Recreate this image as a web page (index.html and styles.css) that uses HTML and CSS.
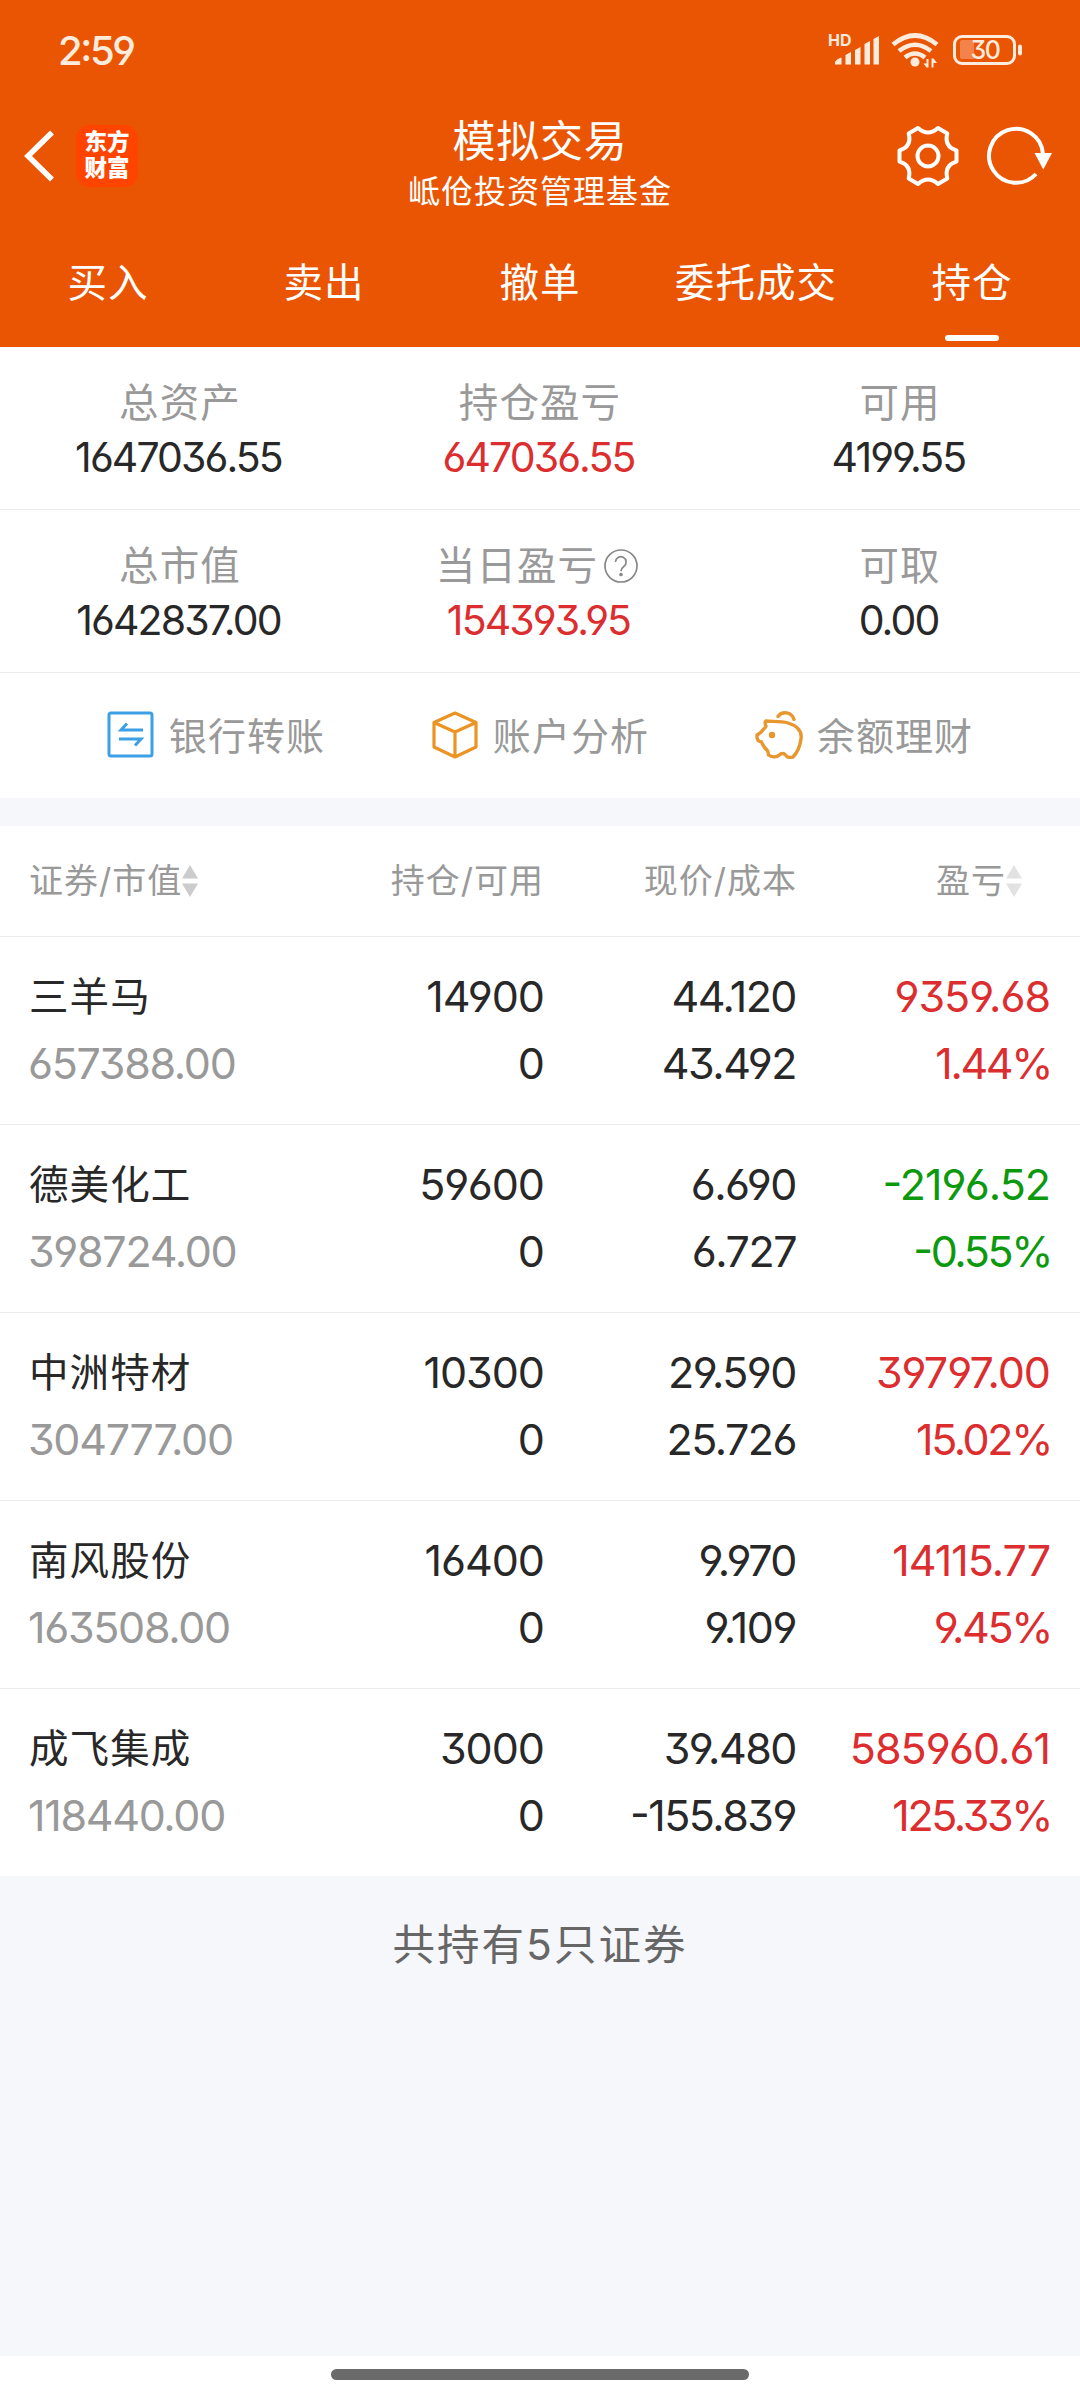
FILE: index.html
```html
<!DOCTYPE html>
<html lang="zh-CN">
<head>
  <meta charset="UTF-8" />
  <meta name="viewport" content="width=device-width, initial-scale=1" />
  <title>模拟交易</title>
  <link rel="stylesheet" href="styles.css">
</head>
<body>
  <header class="header">
    <div class="status">
      <span class="time">2:59</span>
      <svg class="status-icons" width="196" height="40" viewBox="0 0 196 40" fill="#fdebdd">
        <text x="0" y="16" class="hd">HD</text>
        <path d="M7 34.500V32Q9 28.500 13.500 27.500V34.500ZM17.500 34.500V25L23 22V34.500ZM27 34.500V20L32.500 17V34.500ZM36.500 34.500V14L42 11V34.500ZM45.500 34.500V9L51 6V34.500Z"/>
        <g fill="none" stroke="#fdebdd" stroke-width="4.600">
          <path d="M65 14.500Q87 -3.500 109 14.500"/>
          <path d="M71 21Q87 8.500 103 21"/>
          <path d="M77 27.500Q87 19.500 97 27.500"/>
        </g>
        <circle cx="87" cy="32" r="4.500"/>
        <path d="M100.500 29v8.500h-2l-3-4h3v-4.500zM103.500 37.500v-9h2l3.500 4.500h-3.500v4.500z"/>
        <rect x="126.500" y="6.500" width="60" height="27" rx="7.500" fill="none" stroke="#fdebdd" stroke-width="3"/>
        <path d="M134 10h12v19h-12a2 2 0 0 1-2-2V12a2 2 0 0 1 2-2z" fill="#f3834a"/>
        <rect x="190" y="14.500" width="4" height="11" rx="2"/>
        <text x="142.500" y="29" class="battery-text">30</text>
      </svg>
    </div>

    <div class="nav">
      <div class="nav-left">
        <svg width="30" height="52" viewBox="0 0 30 52" fill="none" stroke="#fff" stroke-width="5.500"><path d="M28 2.500 4 26 28 49.500"/></svg>
        <div class="logo">东方<br>财富</div>
      </div>
      <div class="nav-title">
        <h1>模拟交易</h1>
        <p>岻伧投资管理基金</p>
      </div>
      <div class="nav-right">
        <svg width="64" height="64" viewBox="-32 -32 64 64" fill="none" stroke="#fff" stroke-width="4" stroke-linejoin="round">
          <path d="M-10 -28Q0 -19 10 -28L19.300 -22.500Q16 -9.300 28.500 -5.600V5.600Q16 9.300 19.300 22.500L10 28Q0 19 -10 28L-19.300 22.500Q-16 9.300 -28.500 5.600V-5.600Q-16 -9.300 -19.300 -22.500Z"/>
          <circle r="10.500"/>
        </svg>
        <svg width="68" height="64" viewBox="-31 -32 68 64" fill="none" stroke="#fff" stroke-width="4">
          <path d="M20 18A27 27 0 1 1 27 -2"/>
          <path d="M18.500 -3h17.500L27.300 13.500z" fill="#fff" stroke="none"/>
        </svg>
      </div>
    </div>

    <div class="tabs">
      <div class="tab">买入</div>
      <div class="tab">卖出</div>
      <div class="tab">撤单</div>
      <div class="tab">委托成交</div>
      <div class="tab active">持仓</div>
    </div>
  </header>

  <section class="stats">
    <div class="stat"><div class="label">总资产</div><div class="value">1647036.55</div></div>
    <div class="stat"><div class="label">持仓盈亏</div><div class="value red">647036.55</div></div>
    <div class="stat"><div class="label">可用</div><div class="value">4199.55</div></div>
  </section>
  <section class="stats">
    <div class="stat"><div class="label">总市值</div><div class="value">1642837.00</div></div>
    <div class="stat">
      <div class="label help">当日盈亏
        <svg width="36" height="36" viewBox="0 0 36 36" fill="none" stroke="#888" stroke-width="1.700">
          <circle cx="18" cy="18" r="16"/>
          <path d="M12.500 14a5.300 5.300 0 1 1 8.500 4.300c-2 1.500-3 2.500-3 5"/>
          <circle cx="18" cy="26.500" r="1" fill="#888"/>
        </svg>
      </div>
      <div class="value red">154393.95</div>
    </div>
    <div class="stat"><div class="label">可取</div><div class="value">0.00</div></div>
  </section>

  <section class="actions">
    <div class="action">
      <svg width="48" height="48" viewBox="0 0 48 48" fill="none" stroke="#3d9fe5" stroke-width="3">
        <rect x="2" y="2" width="43" height="43" rx="2"/>
        <path d="M36 19H14L20 12.500M12 28H34L28 34.500"/>
      </svg>
      银行转账
    </div>
    <div class="action">
      <svg width="48" height="48" viewBox="0 0 48 48" fill="none" stroke="#ec9423" stroke-width="3.200" stroke-linejoin="round">
        <path d="M24 2 45 11.500V36L24 46 3 36V11.500ZM3 11.500 24 21 45 11.500M24 21V46"/>
      </svg>
      账户分析
    </div>
    <div class="action">
      <svg width="48" height="48" viewBox="0 0 48 48" fill="none" stroke="#e8962e" stroke-width="3.400" stroke-linecap="round" stroke-linejoin="round">
        <path d="M11 10C16 11 25 9.500 33 12C43 15 47 21 46 28C45 35 42 42 38 46C35 47 32 46.500 30.500 44C29 42 26 42 24.500 44C21 47 16 46 13.500 44C13.500 42 13 40 12 39C9 37 8 34 6.500 31C4 30.500 2 28.500 2 26V24C4 22.500 6 22 7 20C9 17 11 17 11 15C10 13 9.500 11 11 10Z"/>
        <path d="M23 5.500C27 0 36.500 0.500 39 8.500"/>
        <circle cx="17" cy="24" r="1.500" fill="#e8962e"/>
      </svg>
      余额理财
    </div>
  </section>

  <section class="holdings">
    <div class="row head">
      <div>证券/市值<svg class="sort" width="16" height="32" viewBox="0 0 16 32" fill="#ccc"><path d="M8 0 16 13.500H0ZM0 18.500H16L8 32Z"/></svg></div>
      <div>持仓/可用</div>
      <div>现价/成本</div>
      <div class="head-profit">盈亏<svg class="sort" width="16" height="32" viewBox="0 0 16 32" fill="#e2e2e2"><path d="M8 0 16 13.500H0ZM0 18.500H16L8 32Z"/></svg></div>
    </div>
    <div class="row">
      <div><span class="name">三羊马</span><span class="gray">657388.00</span></div>
      <div><span>14900</span><span>0</span></div>
      <div class="price"><span>44.120</span><span>43.492</span></div>
      <div class="red"><span>9359.68</span><span class="rate">1.44%</span></div>
    </div>
    <div class="row">
      <div><span class="name">德美化工</span><span class="gray">398724.00</span></div>
      <div><span>59600</span><span>0</span></div>
      <div class="price"><span>6.690</span><span>6.727</span></div>
      <div class="green"><span>-2196.52</span><span class="rate">-0.55%</span></div>
    </div>
    <div class="row">
      <div><span class="name">中洲特材</span><span class="gray">304777.00</span></div>
      <div><span>10300</span><span>0</span></div>
      <div class="price"><span>29.590</span><span>25.726</span></div>
      <div class="red"><span>39797.00</span><span class="rate">15.02%</span></div>
    </div>
    <div class="row">
      <div><span class="name">南风股份</span><span class="gray">163508.00</span></div>
      <div><span>16400</span><span>0</span></div>
      <div class="price"><span>9.970</span><span>9.109</span></div>
      <div class="red"><span>14115.77</span><span class="rate">9.45%</span></div>
    </div>
    <div class="row">
      <div><span class="name">成飞集成</span><span class="gray">118440.00</span></div>
      <div><span>3000</span><span>0</span></div>
      <div class="price"><span>39.480</span><span>-155.839</span></div>
      <div class="red"><span>585960.61</span><span class="rate">125.33%</span></div>
    </div>
  </section>

  <div class="summary">共持有5只证券</div>
  <footer class="home-bar"><div class="home-handle"></div></footer>
</body>
</html>
```
FILE: styles.css
```css
* {
  box-sizing: border-box;
}
body {
  margin: 0;
  width: 1080px;
  height: 2400px;
  display: flex;
  flex-direction: column;
  background: #f6f7fa;
  color: #282828;
  font-family: Inter, "Noto Sans CJK SC", sans-serif;
  /* open 6 and 9, flat-top 3, raised minus */
  font-feature-settings: "cv03", "cv04", "cv09", "case";
  overflow: hidden;
}
h1, p {
  margin: 0;
  font-weight: 400;
}
svg {
  display: block;
  flex: none;
}

/* header */
.header {
  height: 347px;
  background: #ea5504;
  color: #fff;
}
.status {
  display: flex;
  justify-content: space-between;
  align-items: center;
  height: 100px;
  padding: 0 56px 0 58px;
}
.time {
  font-size: 40px;
  font-weight: 500;
  letter-spacing: -2.4px;
  color: #fdebdd;
}
.hd {
  font-size: 16px;
  font-weight: 700;
}
.battery-text {
  font-size: 25px;
  font-weight: 500;
  letter-spacing: -1.5px;
}
.nav {
  display: grid;
  grid-template-columns: 300px 1fr 300px;
  grid-template-rows: 112px;
  align-items: center;
  height: 112px;
}
.nav-left {
  display: flex;
  align-items: center;
  gap: 22px;
  padding-left: 24px;
}
.logo {
  width: 62px;
  height: 62px;
  padding-top: 4px;
  border-radius: 14px;
  background: #ff4400;
  font-size: 22.5px;
  font-weight: 900;
  line-height: 26px;
  text-align: center;
}
.nav-title {
  padding-top: 15px;
  text-align: center;
}
.nav-title h1 {
  font-size: 43px;
  line-height: 56px;
  letter-spacing: 0.8px;
}
.nav-title p {
  font-size: 32px;
  line-height: 46px;
  letter-spacing: 1px;
}
.nav-right {
  display: flex;
  justify-content: flex-end;
  gap: 25px;
  padding-right: 27px;
}
.tabs {
  display: grid;
  grid-template-columns: repeat(5, 1fr);
  height: 135px;
}
.tab {
  display: flex;
  flex-direction: column;
  align-items: center;
  font-size: 39.5px;
  line-height: 60px;
  padding-top: 41px;
  letter-spacing: 1.1px;
}
.tab.active::after {
  content: "";
  width: 54px;
  height: 6px;
  margin-top: 22px;
  border-radius: 3px;
  background: #fff;
}

/* account figures */
.stats {
  display: grid;
  grid-template-columns: repeat(3, 1fr);
  height: 163px;
  background: #fff;
  border-bottom: 1px solid #ececec;
  text-align: center;
}
.label {
  display: flex;
  justify-content: center;
  align-items: center;
  gap: 5px;
  margin-top: 28px;
  font-size: 39.5px;
  line-height: 56px;
  letter-spacing: 1.1px;
  color: #999;
}
.label.help {
  padding-right: 5px;
}
.value {
  padding-right: 3px;
  font-size: 41px;
  line-height: 52px;
  letter-spacing: -1.9px;
}
.red {
  color: #dc2d2f;
}
.green {
  color: #0d990d;
}
.gray {
  color: #999;
}

/* shortcuts */
.actions {
  display: grid;
  grid-template-columns: repeat(3, 1fr);
  height: 125px;
  padding: 0 54px 4px;
  background: #fff;
}
.action {
  display: flex;
  justify-content: center;
  align-items: center;
  gap: 14px;
  font-size: 38px;
  letter-spacing: 1.1px;
  color: #999;
}
.action svg {
  margin-top: 3px;
}

/* holdings table */
.holdings {
  margin-top: 28px;
}
.row {
  display: grid;
  grid-template-columns: 262px 253px 253px 253px;
  height: 188px;
  padding: 26px 29px 0 29px;
  background: #fff;
  border-bottom: 1px solid #ececec;
  font-size: 43px;
  line-height: 67px;
  letter-spacing: -1px;
  text-align: right;
}
.row:last-child {
  border-bottom: none;
  height: 187px;
}
.row > div:first-child {
  text-align: left;
}
.row span {
  display: block;
}
.row .name {
  padding-top: 1px;
  margin-bottom: -1px;
  font-size: 39.5px;
  letter-spacing: 1.1px;
}
.row .gray {
  margin-left: -1px;
  letter-spacing: -1.3px;
}
.row .price {
  padding-right: 1px;
  letter-spacing: -1.5px;
}
.row .rate {
  margin-right: -1px;
  letter-spacing: -2.4px;
}
.row.head {
  height: 111px;
  padding-top: 0;
  font-size: 34px;
  line-height: 110px;
  letter-spacing: 1px;
  color: #999;
}
.head > div:first-child,
.head-profit {
  display: flex;
  align-items: center;
}
.head-profit {
  justify-content: flex-end;
  padding-right: 28px;
}

.summary {
  flex: 1;
  padding-top: 38px;
  font-size: 42.5px;
  line-height: 62px;
  letter-spacing: 2px;
  text-align: center;
  color: #666;
}
.home-bar {
  height: 44px;
  padding-top: 13px;
  background: #fff;
}
.home-handle {
  width: 418px;
  height: 11px;
  margin: 0 auto;
  border-radius: 6px;
  background: #6a6a6a;
}
```
